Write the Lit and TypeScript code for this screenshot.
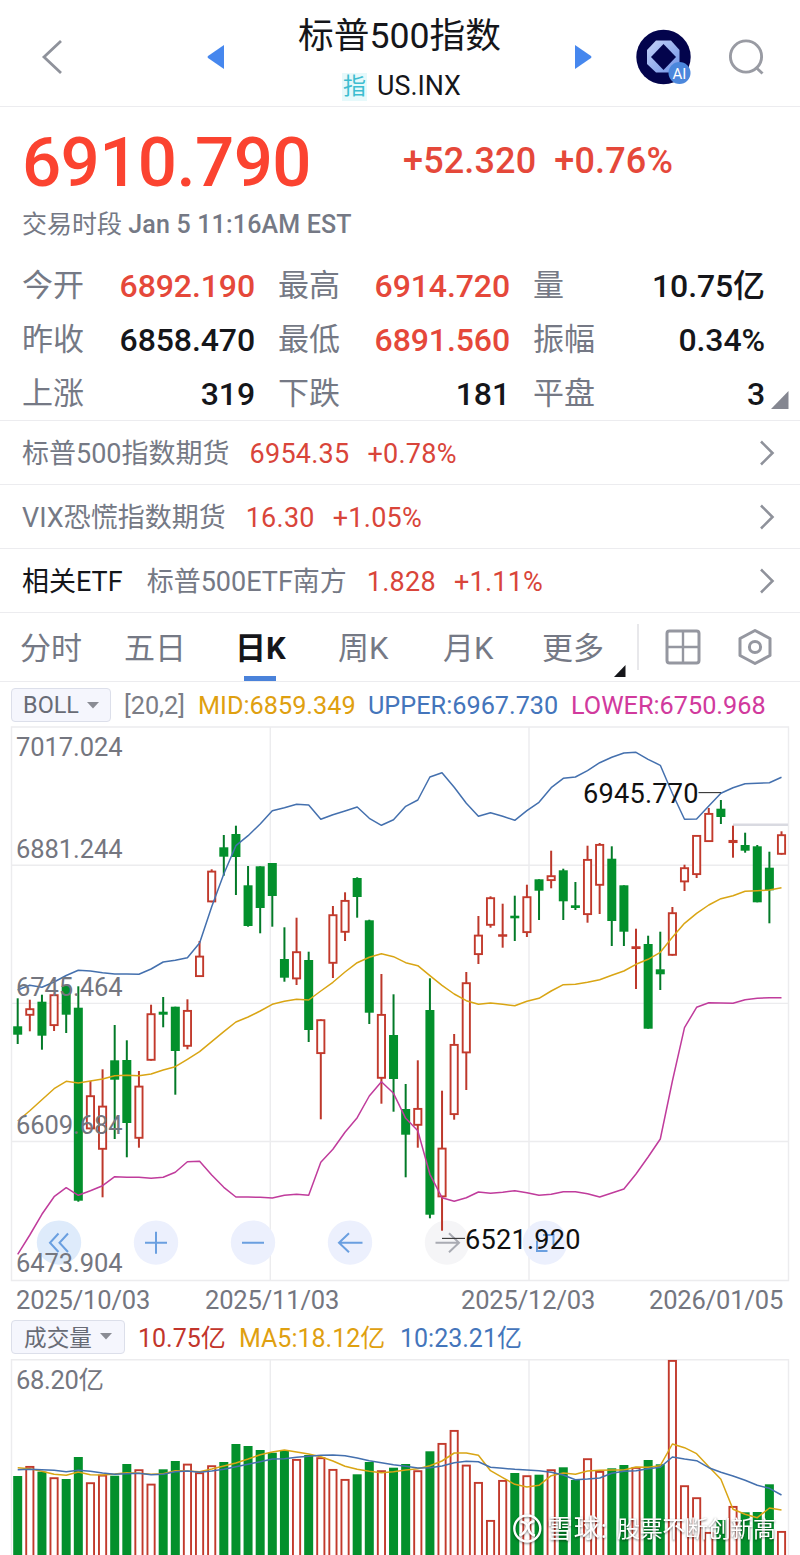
import { LitElement, html, svg, css } from "lit";
import { customElement, property } from "lit/decorators.js";
import { classMap } from "lit/directives/class-map.js";

type Candle = [string, number, number, number, number];

// [direction, high, body top, body bottom, low] in chart units
const CANDLES: Candle[] = [
  ["g", 998.3, 1026.3, 1034.7, 1044], ["r", 999.7, 1008.3, 1015.7, 1031.3], ["g", 994.7, 1001.7, 1035.7, 1049.7],
  ["r", 993.7, 994.3, 1026, 1031], ["g", 986, 986, 1014.7, 1033], ["g", 986.3, 1007.7, 1200.7, 1201.7],
  ["r", 1081, 1095.3, 1129.3, 1129.3], ["r", 1069.3, 1105.7, 1149.7, 1197.3], ["g", 1025, 1060.3, 1079.7, 1139],
  ["g", 1040.3, 1060, 1123, 1157.3], ["r", 1071, 1085.7, 1138.7, 1147.7], ["r", 1004.7, 1013.3, 1060.7, 1060.7],
  ["g", 997, 1011.7, 1014.7, 1027.3], ["g", 1006.7, 1006.7, 1051, 1094.7], ["r", 999.3, 1010, 1046.7, 1049.3],
  ["r", 941, 955.7, 977, 977], ["r", 869.3, 870.7, 902.3, 902.3], ["g", 835, 847.3, 856.7, 875.7],
  ["g", 825.7, 834, 857, 895], ["g", 866, 885.3, 926, 926.7], ["g", 866.3, 866.3, 908, 933.3],
  ["g", 863, 863, 896, 926.7], ["g", 927.3, 959, 977.7, 981.7], ["r", 917.7, 951.3, 979.3, 985],
  ["g", 951.7, 960, 1030, 1042], ["r", 1019.3, 1019.3, 1054, 1119.3], ["r", 906, 914.3, 963.7, 978],
  ["r", 892.3, 900, 932.7, 941], ["g", 877.3, 878, 897, 917.7], ["g", 919.7, 920.3, 1012.7, 1024],
  ["r", 974, 1014, 1078.7, 1103.7], ["g", 994.3, 1035, 1079, 1111.7], ["g", 1084, 1109, 1134.7, 1177.3],
  ["r", 1060.3, 1108, 1125.7, 1147.7], ["g", 978.3, 1010, 1214.7, 1218.3], ["r", 1090.7, 1147.7, 1197.3, 1230.7],
  ["r", 1034, 1044, 1115, 1119.7], ["r", 972, 982.3, 1053.3, 1090], ["r", 916, 934.7, 955, 964],
  ["r", 896.3, 897.3, 925.7, 927.7], ["r", 903.7, 934.3, 936.3, 947.7], ["g", 895.7, 915.7, 918.3, 941],
  ["r", 884.7, 896.3, 933, 937], ["g", 879.3, 879.3, 890.7, 920], ["r", 850.7, 875.3, 881, 888.3],
  ["g", 868.7, 870.3, 901.3, 920], ["g", 882, 905.3, 908, 910], ["r", 845.7, 859, 915, 922.7],
  ["r", 843, 844, 885.7, 914], ["g", 846.3, 858.7, 921, 946], ["g", 885.3, 885.3, 931.7, 946],
  ["r", 928.7, 946.3, 949, 989], ["g", 935.7, 944, 1028.7, 1028.7], ["g", 931.7, 969.3, 974.3, 990],
  ["r", 907, 912.3, 955.7, 955.7], ["r", 864.7, 867.3, 882.3, 891], ["r", 835, 835, 875, 878],
  ["r", 808, 813, 842, 842], ["g", 800, 808.7, 817, 824], ["r", 825.7, 840, 843, 857.7],
  ["g", 832.7, 845, 850.7, 852.7], ["g", 845, 846.3, 902.3, 902.3], ["g", 851.7, 867.7, 890.3, 923.3],
  ["r", 831.3, 834.3, 854.7, 854.7],
];

const UPPER = [990, 985.3, 987.3, 982, 975.5, 970.3, 971, 972.7, 974, 974, 974.3, 969, 962, 960.3, 957.7, 943, 906.7, 874, 845.7, 835.7, 824, 810.7, 807.7, 804.3, 805, 819.3, 814.7, 811, 807, 818.3, 825.3, 819.7, 806.3, 800, 777, 772.7, 787.3, 803.3, 816.3, 812.7, 816.3, 820.3, 810.7, 802.3, 787.7, 778.3, 777, 770.7, 762.7, 757.3, 753, 752.3, 759.3, 765.3, 793.5, 819.3, 819, 806, 793.3, 787.7, 783.7, 783.3, 782.7, 777.3];
const MID = [1121, 1110.7, 1099.7, 1088.7, 1081.3, 1083, 1081, 1079, 1075.7, 1075.3, 1075.7, 1074, 1070, 1066.7, 1059.3, 1051.7, 1041.7, 1031.7, 1022, 1017, 1011, 1004.3, 1001.3, 999.3, 1000, 991, 982.3, 972, 962.7, 957.3, 953.7, 956.7, 962.7, 965.7, 975.7, 985.3, 994, 1000.7, 1004.3, 1003, 1004.3, 1005.7, 1001.3, 998.3, 991, 984.7, 984.3, 982.3, 979.7, 975.3, 971, 964.3, 959.3, 952.3, 937.3, 923.3, 913.3, 905, 898.7, 895.7, 891.3, 890.7, 890, 887.7];
const LOWER = [1254.3, 1235, 1214.3, 1196.7, 1187.7, 1195.3, 1190.7, 1185.7, 1176.7, 1177.3, 1177.3, 1178.3, 1177.3, 1172.3, 1161.7, 1161.3, 1175, 1187.3, 1197, 1197, 1197.3, 1198, 1195.3, 1194.3, 1195.3, 1162.3, 1149.3, 1132.3, 1117.7, 1096, 1081.7, 1093.3, 1118.3, 1130.7, 1174.3, 1197.7, 1201.3, 1197.7, 1192, 1193.3, 1192.3, 1190.7, 1192.7, 1195.3, 1194.3, 1191.7, 1191.7, 1193.7, 1197, 1193, 1189, 1174, 1157, 1139, 1081, 1027.7, 1007.3, 1002.7, 1003, 1003.3, 999.7, 998.3, 997.7, 997.7];
const VOLUME = [1476, 1466, 1471.7, 1477.3, 1479, 1457, 1482.3, 1474.7, 1475.7, 1464, 1469.3, 1483.7, 1469.3, 1461, 1463.7, 1472.3, 1465.3, 1462, 1444, 1446, 1450, 1452.7, 1450.3, 1459, 1455, 1457.3, 1469, 1479, 1474.3, 1462, 1470.3, 1467.7, 1464, 1470.3, 1451.3, 1443, 1430, 1464.7, 1482, 1520, 1480, 1473, 1475.3, 1474.7, 1469.3, 1467.3, 1480, 1458.3, 1471, 1468.3, 1465, 1467, 1460, 1464.3, 1360, 1485.3, 1497.3, 1532, 1520, 1506, 1512.3, 1512, 1484.3, 1531];
const MA5 = [1467.7, 1468.7, 1471.3, 1474.3, 1475.3, 1472, 1474.7, 1475, 1474, 1472.7, 1473.3, 1474.3, 1473.7, 1470.7, 1471, 1471.7, 1469, 1466, 1463, 1459, 1454.7, 1452, 1450, 1452, 1454, 1456.7, 1461, 1466.3, 1469.3, 1471.3, 1472.7, 1471.7, 1470, 1468.7, 1465.7, 1461, 1453, 1453, 1455.3, 1470.7, 1477.7, 1484.3, 1487, 1485.3, 1475.7, 1473, 1474.3, 1471, 1470.3, 1470, 1470, 1467, 1467.3, 1465.7, 1444, 1447.7, 1453.7, 1466.7, 1479.3, 1509.3, 1514.3, 1517.7, 1508, 1510];
const MA10 = [1469.7, 1469.3, 1469.7, 1470.3, 1471.7, 1470.3, 1471.3, 1473, 1474.3, 1473.7, 1473.3, 1474.7, 1474.3, 1471.7, 1471, 1472.3, 1471, 1469.3, 1466.7, 1464.3, 1461.7, 1459, 1458.7, 1457.3, 1456.3, 1455.3, 1455, 1455.7, 1458, 1460.7, 1462.7, 1464.7, 1466.3, 1468, 1467.7, 1466, 1462.7, 1461.3, 1461.7, 1467.3, 1468.3, 1469.3, 1470, 1470.7, 1472.3, 1475, 1479.7, 1479, 1478, 1473.3, 1471.3, 1470.7, 1468.7, 1467.3, 1457, 1459, 1460.7, 1467.7, 1472.3, 1476, 1480.3, 1485.3, 1488.3, 1495];

const cx = (i: number) => 17.7 + i * 12.124;
const points = (values: number[]) => values.map((y, i) => `${cx(i).toFixed(1)},${y}`).join(" ");

const chartStyles = css`
  :host { display: block; }
  svg { display: block; }
  text { font-family: Roboto, "Noto Sans CJK SC", sans-serif; }
  .grid { stroke: #ececee; stroke-width: 1.4; fill: none; }
  .axis { fill: #74767f; font-size: 25.5px; }
  .mark { fill: #111; font-size: 27.2px; }
  .line { fill: none; stroke-width: 1.5; stroke-linejoin: round; }
  .blue { stroke: #4470ae; }
  .gold { stroke: #d9a514; }
  .pink { stroke: #c03c9c; }
  .g-body { fill: #03902c; }
  .g-wick { stroke: #037a28; stroke-width: 2; }
  .r-body { fill: #fff; stroke: #c23a2c; stroke-width: 1.9; }
  .r-wick { stroke: #bd382b; stroke-width: 2; }
  .wm { fill: #fff; font-size: 23px; font-weight: 400; filter: drop-shadow(0.7px 1px 1px rgba(0, 0, 0, 0.55)); }
`;

@customElement("price-chart")
export class PriceChart extends LitElement {
  static styles = [chartStyles, css`
    .disc { fill: #ecf0fd; }
    .disc.on { fill: #deebfb; }
    .disc.off { fill: #f5f5f7; }
    .glyph { fill: none; stroke: #6a9fe0; stroke-width: 2; }
    .glyph.off { stroke: #a9abb3; }
    .last { stroke: #d9dae1; stroke-width: 2.6; }
    .lead { stroke: #333; stroke-width: 1.1; }
  `];

  private candle([dir, high, top, bottom, low]: Candle, i: number) {
    const x = cx(i);
    if (dir === "g") {
      return svg`<line class="g-wick" x1=${x} x2=${x} y1=${high} y2=${low}></line>
        <rect class="g-body" x=${x - 4.5} y=${top} width="9" height=${Math.max(bottom - top, 2.4)}></rect>`;
    }
    return svg`<line class="r-wick" x1=${x} x2=${x} y1=${high} y2=${low}></line>
      <rect class="r-body" x=${x - 3.6} y=${top + 0.9} width="7.2" height=${Math.max(bottom - top - 1.8, 0.6)}></rect>`;
  }

  render() {
    const labels: [string, number][] = [["7017.024", 756], ["6881.244", 858], ["6745.464", 996], ["6609.684", 1134], ["6473.904", 1272]];
    return html`<svg width="800" height="556" viewBox="0 726 800 556">
      <path class="grid" d="M11.5 727H788.5V1280.5H11.5ZM11.5 865.3H788.5M11.5 1003.4H788.5M11.5 1141.5H788.5M270.3 727V1280M529 727V1280"></path>
      <line class="last" x1="733" x2="788" y1="824.8" y2="824.8"></line>
      ${[59, 156, 253, 350, 447, 545].map((x, i) => svg`<circle class="disc ${i === 0 ? "on" : i === 4 ? "off" : ""}" cx=${x} cy="1242.6" r="22.2"></circle>`)}
      <path class="glyph" d="M58.5 1233.5L50 1242.7L58.5 1252M68 1233.5L59.5 1242.7L68 1252"></path>
      <path class="glyph" d="M145 1242.7H167M156 1231.7V1253.7M242 1242.7H264"></path>
      <path class="glyph" d="M362.5 1242.7H339M349 1233.2L339 1242.7L349 1252.2"></path>
      <path class="glyph off" d="M435.5 1242.7H459M449 1233.2L459 1242.7L449 1252.2"></path>
      <path class="glyph" d="M543 1235H553.5V1245M537 1240.5V1251H547.5"></path>
      ${CANDLES.map((c, i) => this.candle(c, i))}
      <polyline class="line gold" points=${points(MID)}></polyline>
      <polyline class="line blue" points=${points(UPPER)}></polyline>
      <polyline class="line pink" points=${points(LOWER)}></polyline>
      ${labels.map(([t, y]) => svg`<text class="axis" x="16" y=${y} textLength="106.5">${t}</text>`)}
      <line class="lead" x1="698.5" x2="721" y1="792.6" y2="792.6"></line>
      <line class="lead" x1="442" x2="465" y1="1238.4" y2="1238.4"></line>
      <text class="mark" x="583" y="803" textLength="115.5">6945.770</text>
      <text class="mark" x="465" y="1248.5" textLength="115.5">6521.920</text>
    </svg>`;
  }
}

@customElement("volume-chart")
export class VolumeChart extends LitElement {
  static styles = [chartStyles, css`
    .ring { fill: none; stroke: #fff; stroke-width: 2.4; filter: drop-shadow(0.7px 1px 1px rgba(0, 0, 0, 0.5)); }
    .brand { font-size: 26px; }
  `];

  render() {
    return html`<svg width="800" height="196" viewBox="0 1359 800 196">
      <path class="grid" d="M11.5 1560V1359.7H788.5V1560M270.3 1360V1560M529 1360V1560"></path>
      <text class="axis" x="16" y="1388.5" textLength="88">68.20亿</text>
      ${VOLUME.map((y, i) => CANDLES[i][0] === "g"
        ? svg`<rect class="g-body" x=${cx(i) - 4.5} y=${y} width="9" height="220"></rect>`
        : svg`<rect class="r-body" x=${cx(i) - 3.6} y=${y + 0.9} width="7.2" height="220"></rect>`)}
      <polyline class="line gold" points=${points(MA5)}></polyline>
      <polyline class="line blue" points=${points(MA10)}></polyline>
      <g class="ring">
        <circle cx="527.3" cy="1528.5" r="13"></circle>
        <path d="M520.5 1521.5Q529 1523 526.5 1528.5T519.5 1535.5M534.5 1521Q527 1522.5 528.5 1528.5T535 1535.5"></path>
      </g>
      <text class="wm brand" x="547" y="1538" textLength="60">雪球:</text>
      <text class="wm" x="617" y="1537" textLength="159">股票不断创新高</text>
    </svg>`;
  }
}

@customElement("stat-cell")
export class StatCell extends LitElement {
  @property() label = "";
  @property() value = "";
  @property({ type: Boolean }) up = false;

  static styles = css`
    :host { display: flex; justify-content: space-between; align-items: center; height: 54px; }
    .label, .value { line-height: 54px; height: 54px; }
    .label { color: #757985; font-size: 31px; }
    .value { color: #15161a; font-size: 32px; font-weight: 500; letter-spacing: -0.1px; }
    .up { color: #e5483a; }
  `;

  render() {
    return html`<span class="label">${this.label}</span>
      <span class=${classMap({ value: true, up: this.up })}>${this.value}</span>`;
  }
}

@customElement("quote-row")
export class QuoteRow extends LitElement {
  @property() lead = "";
  @property() name = "";
  @property() price = "";
  @property() change = "";

  static styles = css`
    :host { display: flex; align-items: center; border-bottom: 1px solid #ececef; padding: 1px 25px 0 22px; box-sizing: border-box; height: 64px; font-size: 27px; }
    .lead, .name { margin-top: -3px; }
    .lead { color: #15161a; margin-right: 24px; }
    .name { color: #757985; margin-right: 20px; }
    .num { color: #d9453a; font-size: 27px; letter-spacing: 0.25px; margin-right: 18px; padding-top: 1px; }
    svg { margin-left: auto; margin-top: -1px; }
  `;

  render() {
    return html`${this.lead ? html`<span class="lead">${this.lead}</span>` : ""}
      <span class="name">${this.name}</span>
      <span class="num">${this.price}</span><span class="num">${this.change}</span>
      <svg width="16" height="26" viewBox="0 0 16 26" fill="none" stroke="#8f929b" stroke-width="2.6"><path d="M2 1.5L13.5 13L2 24.5"></path></svg>`;
  }
}

@customElement("app-root")
export class AppRoot extends LitElement {
  static styles = css`
    :host { display: block; width: 800px; height: 1555px; overflow: hidden; background: #fff; color: #15161a; font-family: Roboto, "Noto Sans CJK SC", sans-serif; white-space: nowrap; }
    * { box-sizing: border-box; }
    header { display: flex; align-items: center; height: 107px; border-bottom: 1.5px solid #ececef; padding: 7px 34px 0 41px; }
    header svg { flex: none; display: block; }
    .prev { margin-left: 144px; }
    .titles { display: flex; flex-direction: column; align-items: center; width: 354px; }
    .title { font-size: 35.7px; line-height: 50px; margin-top: 9px; }
    .code { display: flex; align-items: center; gap: 10px; height: 50px; font-size: 26.8px; margin-left: 4px; }
    .tag { color: #3dbdd0; background: #e6f9fb; font-size: 23px; line-height: 28px; width: 25px; text-align: center; margin-top: 2px; }
    .ai { margin-left: 44px; }
    .search { margin-left: 36px; }
    .price { display: flex; align-items: center; height: 94px; padding: 16px 0 0 22px; color: #fb4330; }
    .big { font-size: 69px; font-weight: 500; width: 381px; letter-spacing: -0.6px; }
    .delta { font-size: 36px; font-weight: 500; color: #e5483a; margin-top: -3px; margin-right: 18px; letter-spacing: 0.15px; }
    .status { height: 58px; line-height: 48px; padding-left: 22px; font-size: 25px; color: #757985; }
    .status .en { font-weight: 500; letter-spacing: 0.18px; }
    .stats { display: grid; grid-template-columns: 233px 232px 232px; column-gap: 23px; grid-auto-rows: 54px; height: 162px; padding-left: 22px; border-bottom: 1.5px solid #ececef; position: relative; }
    .corner { position: absolute; left: 771px; top: 132px; }
    .tabs { display: grid; grid-template-columns: 104px 111px 103px 105px 99px 94px 29px 72px 1fr; align-items: center; height: 69px; padding-left: 20px; border-bottom: 1.5px solid #ececef; font-size: 31px; color: #757985; position: relative; }
    .tabs span { padding-bottom: 4px; }
    .tabs .on { color: #15161a; font-weight: 700; }
    .bar { position: absolute; left: 244px; top: 63px; width: 32px; height: 5px; background: #4a82da; }
    .more { position: absolute; left: 613px; top: 52px; }
    .rule { justify-self: start; width: 1.5px; height: 46px; background: #e8e8eb; margin-left: 1px; }
    .legend { display: flex; align-items: center; height: 44px; padding: 2px 0 0 11px; font-size: 25.25px; }
    .volume { height: 42px; padding-top: 0; font-size: 25px; }
    .volume i { margin-top: -4px; }
    .pick { display: flex; align-items: center; justify-content: center; gap: 8px; width: 100px; height: 34px; border: 1.5px solid #dcdfea; border-radius: 4px; background: #f5f6fd; color: #686b75; font-size: 23.4px; margin-right: 13px; }
    .volume .pick { margin-top: -3px; }
    .wide { width: 114px; font-size: 22.6px; }
    .legend i { font-style: normal; }
    .par { color: #7b7d86; width: 74px; }
    .gold { color: #dfa010; }
    .blue { color: #4475bb; }
    .pink { color: #d13a9d; }
    .red { color: #c2352b; }
    .mid { width: 170px; }
    .up { width: 203px; }
    .vol { width: 101px; }
    .ma { width: 161px; }
    .dates { display: flex; height: 35px; line-height: 36px; font-size: 25.5px; color: #74767f; padding-left: 16px; letter-spacing: -0.15px; }
    .d1 { width: 189px; }
    .d2 { width: 256px; }
    .d3 { width: 188px; }
  `;

  render() {
    return html`
      <header>
        <svg width="22" height="36" viewBox="0 0 22 36" fill="none" stroke="#8f929b" stroke-width="2.8"><path d="M20 2L3 18L20 34"></path></svg>
        <svg class="prev" width="18" height="26" viewBox="0 0 18 26"><path d="M17 1V25L1 14Q0 13 1 12Z" fill="#4687ee"></path></svg>
        <div class="titles">
          <div class="title">标普500指数</div>
          <div class="code"><span class="tag">指</span><span>US.INX</span></div>
        </div>
        <svg width="18" height="26" viewBox="0 0 18 26"><path d="M1 1V25L17 14Q18 13 17 12Z" fill="#4687ee"></path></svg>
        <svg class="ai" width="56" height="56" viewBox="0 0 56 56">
          <defs><linearGradient id="oct" x1="0" y1="0" x2="1" y2="1"><stop offset="0" stop-color="#c5d2f8"></stop><stop offset="1" stop-color="#6f93e6"></stop></linearGradient></defs>
          <circle cx="27.5" cy="28" r="27.2" fill="#03044c"></circle>
          <path d="M20 11.5H35L43.5 21V35L35 43.5H20L11 35V21Z" fill="url(#oct)"></path>
          <path d="M27.5 15L40 28L27.5 41L15 28Z" fill="#03044c"></path>
          <circle cx="43.5" cy="44" r="11" fill="#4b87dc"></circle>
          <text x="43.5" y="49.5" text-anchor="middle" font-size="15" fill="#fff">AI</text>
        </svg>
        <svg class="search" width="38" height="38" viewBox="0 0 38 38" fill="none" stroke="#999ba3" stroke-width="2.9"><circle cx="18" cy="18.5" r="15.6"></circle><path d="M27.5 29L34.5 35.5"></path></svg>
      </header>
      <div class="price"><span class="big">6910.790</span><span class="delta">+52.320</span><span class="delta">+0.76%</span></div>
      <div class="status">交易时段 <span class="en">Jan 5 11:16AM EST</span></div>
      <div class="stats">
        <stat-cell label="今开" value="6892.190" up></stat-cell>
        <stat-cell label="最高" value="6914.720" up></stat-cell>
        <stat-cell label="量" value="10.75亿"></stat-cell>
        <stat-cell label="昨收" value="6858.470"></stat-cell>
        <stat-cell label="最低" value="6891.560" up></stat-cell>
        <stat-cell label="振幅" value="0.34%"></stat-cell>
        <stat-cell label="上涨" value="319"></stat-cell>
        <stat-cell label="下跌" value="181"></stat-cell>
        <stat-cell label="平盘" value="3"></stat-cell>
        <svg class="corner" width="18" height="18" viewBox="0 0 18 18"><path d="M0 18H17.5V0Z" fill="#858791"></path></svg>
      </div>
      <quote-row name="标普500指数期货" price="6954.35" change="+0.78%"></quote-row>
      <quote-row name="VIX恐慌指数期货" price="16.30" change="+1.05%"></quote-row>
      <quote-row lead="相关ETF" name="标普500ETF南方" price="1.828" change="+1.11%"></quote-row>
      <div class="tabs">
        <span>分时</span><span>五日</span><span class="on">日K</span><span>周K</span><span>月K</span><span>更多</span>
        <div class="rule"></div>
        <svg width="36" height="36" viewBox="0 0 36 36" fill="none" stroke="#9597a0"><rect x="2" y="2" width="32" height="32" rx="2.5" stroke-width="3"></rect><path d="M18 2V34M2 18H34" stroke-width="2.4"></path></svg>
        <svg width="36" height="38" viewBox="0 0 36 38" fill="none" stroke="#9597a0" stroke-width="3"><path d="M18 2.5L33 10.5V27.5L18 35.5L3 27.5V10.5Z" stroke-linejoin="round"></path><circle cx="18" cy="19" r="5.6"></circle></svg>
        <div class="bar"></div>
        <svg class="more" width="13" height="12" viewBox="0 0 13 12"><path d="M1 12H12.5V0Z" fill="#15161a"></path></svg>
      </div>
      <div class="legend">
        <span class="pick">BOLL<svg width="12" height="7" viewBox="0 0 12 7"><path d="M0 0H12L6 6.5Z" fill="#8a8c94"></path></svg></span>
        <i class="par">[20,2]</i><i class="gold mid">MID:6859.349</i><i class="blue up">UPPER:6967.730</i><i class="pink">LOWER:6750.968</i>
      </div>
      <price-chart></price-chart>
      <div class="dates"><span class="d1">2025/10/03</span><span class="d2">2025/11/03</span><span class="d3">2025/12/03</span><span>2026/01/05</span></div>
      <div class="legend volume">
        <span class="pick wide">成交量<svg width="12" height="7" viewBox="0 0 12 7"><path d="M0 0H12L6 6.5Z" fill="#8a8c94"></path></svg></span>
        <i class="red vol">10.75亿</i><i class="gold ma">MA5:18.12亿</i><i class="blue">10:23.21亿</i>
      </div>
      <volume-chart></volume-chart>
    `;
  }
}
